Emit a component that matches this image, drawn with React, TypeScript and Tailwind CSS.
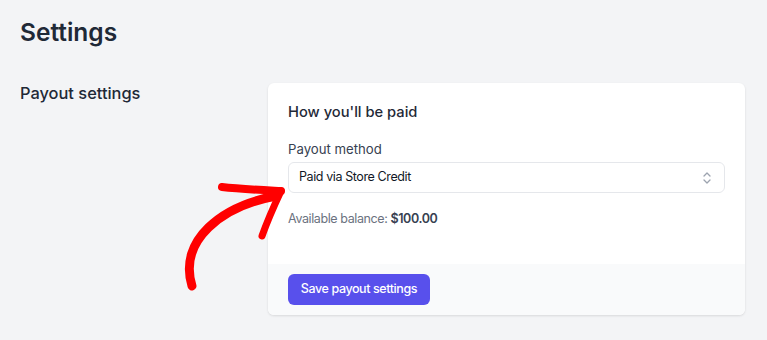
import React from "react";

export default function App() {
  return (
    <div
      className="relative w-[767px] h-[340px] overflow-hidden bg-[#f3f4f6] text-[#111827]"
      style={{ fontFamily: "Inter, 'Noto Sans', sans-serif" }}
    >
      <div className="px-5 pt-4">
        <h1 className="text-[24.5px] leading-8 font-semibold text-[#1f2937]">Settings</h1>
        <div className="mt-[33px] flex">
          <div className="w-[248px]">
            <h2 className="text-[16.4px] leading-6 font-medium text-[#1f2937]">Payout settings</h2>
          </div>
          <div className="mt-[2px] w-[477px] bg-white rounded-md shadow-[0_1px_3px_rgba(0,0,0,0.08),0_1px_2px_rgba(0,0,0,0.04)] overflow-hidden">
            <div className="px-5 pt-[17px] pb-[35px]">
              <h3 className="text-[14.7px] leading-6 font-medium text-[#1f2937]">How you'll be paid</h3>
              <label className="block mt-[15px] text-[13.2px] leading-5 text-[#374151]">Payout method</label>
              <div className="mt-[3px] h-[31px] flex items-center justify-between border border-[#e5e7eb] rounded-md pl-[10px] pr-[12px] text-[12.5px] tracking-[-0.4px] text-[#111827]">
                <span>Paid via Store Credit</span>
                <svg width="10" height="14" viewBox="0 0 10 14" fill="none" stroke="#9ca3af" strokeWidth="1.3" strokeLinecap="round" strokeLinejoin="round">
                  <path d="M2 5 L5 2 L8 5" />
                  <path d="M2 9 L5 12 L8 9" />
                </svg>
              </div>
              <p className="mt-[16px] text-[12.5px] tracking-[-0.4px] leading-5 text-[#6b7280]">
                Available balance: <span className="font-semibold text-[#374151]">$100.00</span>
              </p>
            </div>
            <div className="bg-[#f9fafb] px-5 py-[10px]">
              <button className="h-[31px] w-[142px] rounded-md bg-[#5850ec] text-white text-[12.5px] tracking-[-0.4px] font-medium">
                Save payout settings
              </button>
            </div>
          </div>
        </div>
      </div>
      <svg
        className="absolute left-0 top-0 pointer-events-none"
        width="767"
        height="340"
        viewBox="0 0 767 340"
        fill="none"
        stroke="#ff0000"
        strokeLinecap="round"
        strokeLinejoin="round"
      >
        <path d="M276 196 C 222 206, 178 240, 192 286" strokeWidth="9" />
        <path d="M222 187 C 240 189, 262 190, 281 191" strokeWidth="8" />
        <path d="M281 191 C 273 208, 267 222, 262 236" strokeWidth="7" />
      </svg>
    </div>
  );
}
